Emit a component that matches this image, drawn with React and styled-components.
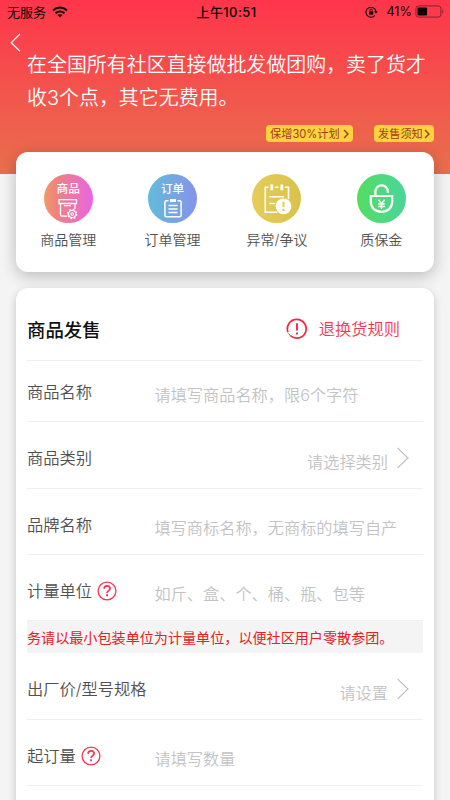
import React from 'react';
import styled, { createGlobalStyle } from 'styled-components';

const GlobalStyle = createGlobalStyle`
  * {
    box-sizing: border-box;
  }

  body {
    margin: 0;
    background: #f4f4f4;
    font-family: Inter, 'Noto Sans CJK SC', sans-serif;
    overflow: hidden;
  }
`;

const Page = styled.div`
  width: 450px;
  height: 800px;
  overflow: hidden;
  background: #f4f4f4;
`;

const Header = styled.header`
  height: 174px;
  background: linear-gradient(#ff354b, #e8704d);
`;

const StatusBar = styled.div`
  display: grid;
  grid-template-columns: 1fr auto 1fr;
  align-items: center;
  height: 22px;
  padding: 0 6px 0 7px;
  color: #0c0305;
  font-size: 13px;
  line-height: 22px;
`;

const StatusGroup = styled.div`
  display: flex;
  align-items: center;
  justify-content: ${({ end }) => (end ? 'flex-end' : 'flex-start')};
  gap: ${({ end }) => (end ? '0' : '6px')};
`;

const Clock = styled.span`
  padding-left: 2px;
  font-weight: 500;
  letter-spacing: 0.4px;
`;

const Percent = styled.span`
  margin: 1px 3px 0 8px;
  font-size: 12.7px;
`;

const Intro = styled.div`
  display: flex;
  height: 92px;
  padding: 11px 0 0 10px;
`;

const BackButton = styled.button`
  width: 17px;
  height: 20px;
  padding: 0;
  border: 0;
  background: none;
  text-align: left;
`;

const Slogan = styled.p`
  width: 405px;
  margin: 16px 0 0;
  color: #fff;
  font-size: 19.95px;
  font-weight: 350;
  line-height: 33px;
`;

const Pills = styled.div`
  display: flex;
  justify-content: flex-end;
  gap: 21px;
  padding: 11px 16px 0 0;
`;

const Pill = styled.a`
  display: flex;
  align-items: center;
  justify-content: space-between;
  width: ${({ width }) => width}px;
  height: 17px;
  padding: 0 4px;
  border-radius: 4px;
  background: #fbd43d;
  color: #a5381c;
  font-size: 11.2px;
  line-height: 18px;
  white-space: nowrap;
`;

const Card = styled.section`
  margin: 0 16px 16px;
  border-radius: 12px;
  background: #fff;
  box-shadow: 0 4px 16px rgba(0, 0, 0, 0.24);
`;

const MenuCard = styled(Card)`
  position: relative;
  display: grid;
  grid-template-columns: repeat(4, 104.4px);
  height: 120px;
  margin-top: -22px;
  padding-top: 22px;
`;

const MenuItem = styled.div`
  display: flex;
  flex-direction: column;
  align-items: center;
  color: #505050;
  font-size: 14px;
  font-weight: 350;
  line-height: 20px;
`;

const Circle = styled.div`
  display: flex;
  flex-direction: column;
  align-items: center;
  width: 49px;
  height: 49px;
  margin-bottom: 7px;
  border-radius: 50%;
  background: ${({ colors }) => `linear-gradient(90deg, ${colors})`};
`;

const CircleText = styled.span`
  height: 16px;
  margin: 7px 0 2px;
  color: #fff;
  font-size: 11.7px;
  font-weight: 500;
  line-height: 16px;
`;

const FormCard = styled(Card)`
  position: relative;
  height: 530px;
  padding: 0 11px;
  box-shadow: 0 3px 9px rgba(0, 0, 0, 0.2);
`;

const TitleRow = styled.div`
  display: flex;
  align-items: center;
  height: 73px;
  padding: 9px 23px 0 0;
  border-bottom: 1px solid #f0f0f0;
`;

const Title = styled.h1`
  flex: 1;
  margin: 3px 0 0;
  color: #111;
  font-size: 18.4px;
  font-weight: 500;
  line-height: 26px;
`;

const RuleLink = styled.a`
  display: flex;
  align-items: center;
  gap: 11px;
  color: #fb344f;
  font-size: 16.25px;
  font-weight: 350;
  line-height: 24px;
`;

const Row = styled.div`
  display: flex;
  align-items: center;
  height: ${({ height }) => height || 66}px;
  padding-top: ${({ drop }) => drop ?? 6}px;
  border-bottom: 1px solid #f0f0f0;
`;

const Label = styled.div`
  display: flex;
  align-items: center;
  gap: 5px;
  width: 127.5px;
  color: #505050;
  font-size: 16.25px;
  font-weight: 350;
  line-height: 24px;
  white-space: nowrap;
`;

const Value = styled.div`
  flex: 1;
  padding-top: 7px;
  color: #c3c3c3;
  font-size: 16.2px;
  font-weight: 350;
  line-height: 24px;
  text-align: ${({ right }) => (right ? 'right' : 'left')};
  white-space: nowrap;
`;

const RowArrow = styled.svg`
  margin: -1px 13px 0 8px;
`;

const Note = styled.div`
  height: 32px;
  background: #f4f4f4;
  color: #e5201f;
  font-size: 14.1px;
  line-height: 33px;
  white-space: nowrap;
`;

const WifiIcon = () => (
  <svg width="16" height="12" viewBox="0 0 16 12" fill="none" stroke="#0c0305">
    <path d="M1 4.4C5 .6 11 .6 15 4.4" strokeWidth="2" />
    <path d="M3.6 7.2c2.6-2.4 6.2-2.4 8.8 0" strokeWidth="2" />
    <path d="M8 11.6 5.5 9.1c1.4-1.3 3.6-1.3 5 0z" fill="#0c0305" stroke="none" />
  </svg>
);

const LockIcon = () => (
  <svg width="13" height="12" viewBox="0 0 13 12" fill="none" stroke="#0c0305">
    <path d="M9.8 9.5A5 5 0 1 1 11 6" strokeWidth="1.1" />
    <path d="M9 5.3h3.8L11 7.8z" fill="#0c0305" stroke="none" />
    <path d="M4 5.4h4.2v3.2H4z" fill="#0c0305" stroke="none" />
    <path d="M4.9 5.5V4.3a1.2 1.2 0 0 1 2.4 0v1.2" strokeWidth=".9" />
  </svg>
);

const BatteryIcon = () => (
  <svg width="29" height="13" viewBox="0 0 29 13" fill="none">
    <rect x=".9" y=".9" width="25" height="11.2" rx="2.6" stroke="#7c2530" />
    <rect x="2.5" y="2.5" width="9.6" height="8" rx="1" fill="#0c0305" />
    <path d="M27.3 4.5c1.4.6 1.4 3.4 0 4z" fill="#7c2530" />
  </svg>
);

const PillArrow = () => (
  <svg width="6" height="10" viewBox="0 0 6 10" fill="none">
    <path d="m1 1 4 4-4 4" stroke="#a5381c" strokeWidth="1.4" />
  </svg>
);

const GoodsIcon = () => (
  <svg width="22" height="21" viewBox="0 0 22 21" fill="none" stroke="#fff" strokeWidth="1.3">
    <path d="M2 .7h17.5v3.8H2zM3.5 4.5v11.3q0 1.3 1.3 1.3H10M18 4.5V10M7 6.7h7" />
    <circle cx="15.2" cy="15" r="3.7" />
    <circle cx="15.2" cy="15" r="1.3" strokeWidth="1.1" />
    <circle cx="15.2" cy="15" r="4.6" strokeWidth="1.2" strokeDasharray="1.8 1.81" />
  </svg>
);

const OrderIcon = () => (
  <svg width="18" height="19" viewBox="0 0 18 19" fill="none" stroke="#fff" strokeWidth="1.5">
    <path d="M4.6 1.8H2.4Q.9 1.8.9 3.3v12.9q0 1.5 1.5 1.5h13.2q1.5 0 1.5-1.5V3.3q0-1.5-1.5-1.5h-2.2" />
    <path d="M6 1.6h6" strokeWidth="3" />
    <path d="M4.5 6.5h9M4.5 10h9M4.5 13.5h9" />
  </svg>
);

const DisputeIcon = () => (
  <svg width="49" height="49" viewBox="0 0 49 49" fill="none" stroke="#fff" strokeWidth="1.6">
    <path d="M16.5 13.3h-3.2v24.9h12M23 13.3h3.5M32.8 13.3h3.7v12" />
    <path d="M17.3 22.8h14.5M17.3 29.5h6" />
    <path d="M19.8 10.6v5.6M29.8 10.6v5.6" strokeWidth="2.8" />
    <circle cx="31.5" cy="32.3" r="7.9" fill="#fff" stroke="none" />
    <path d="M31.5 27.8v5.3M31.5 34.7v2.2" stroke="#decb50" strokeWidth="1.9" />
  </svg>
);

const DepositIcon = () => (
  <svg width="49" height="49" viewBox="0 0 49 49" fill="none" stroke="#fff" strokeWidth="2.2">
    <path d="M18.4 22v-4.5a6.2 6.2 0 0 1 12.4 0v1.3" />
    <path d="M13.8 22h21.4v5.7c0 6.2-4.7 10.2-10.7 10.2s-10.7-4-10.7-10.2z" />
    <path d="m21.4 25.7 3.1 3.9 3.1-3.9M24.5 29.6v5.5M21.2 30h6.6M21.2 32.5h6.6" strokeWidth="1.4" />
  </svg>
);

const AlertIcon = () => (
  <svg width="22" height="22" viewBox="0 0 22 22" fill="none" stroke="#fb2340" strokeWidth="1.7">
    <path d="M2 14.2A9.4 9.4 0 1 1 4.2 17.5" />
    <path d="M4.2 17.5q-1.2-.9-1.7-2" strokeWidth="1" />
    <path d="M11 5.3v7.3M11 14.5v2.1" strokeWidth="1.9" />
  </svg>
);

const HelpIcon = () => (
  <svg width="20" height="20" viewBox="0 0 20 20" fill="none" stroke="#fb344f">
    <circle cx="10" cy="10" r="8.9" strokeWidth="1.3" />
    <path d="M7.1 7.8c0-3.9 6-3.7 6-.4 0 2.2-3 2.3-3 4.5M10.1 13.2v2" strokeWidth="1.8" />
  </svg>
);

const menu = [
  { label: '商品管理', text: '商品', icon: <GoodsIcon />, colors: '#f09b68, #ef827f 25%, #e865e5' },
  { label: '订单管理', text: '订单', icon: <OrderIcon />, colors: '#62bbdb, #8693e9' },
  { label: '异常/争议', icon: <DisputeIcon />, colors: '#e6cd5b, #d9c24a' },
  { label: '质保金', icon: <DepositIcon />, colors: '#55dc61, #48d69b' },
];

const Field = ({ label, value, help, arrow, height, drop }) => (
  <Row height={height} drop={drop}>
    <Label>
      {label}
      {help && <HelpIcon />}
    </Label>
    <Value right={arrow ? 1 : undefined}>{value}</Value>
    {arrow && (
      <RowArrow width="14" height="22" viewBox="0 0 14 22" fill="none">
        <path d="M1.5.8 12 11 1.5 21.2" stroke="#bdbdbd" strokeWidth="1.1" />
      </RowArrow>
    )}
  </Row>
);

const App = () => (
  <Page>
    <GlobalStyle />
    <Header>
      <StatusBar>
        <StatusGroup>
          无服务
          <WifiIcon />
        </StatusGroup>
        <Clock>上午10:51</Clock>
        <StatusGroup end={1}>
          <LockIcon />
          <Percent>41%</Percent>
          <BatteryIcon />
        </StatusGroup>
      </StatusBar>
      <Intro>
        <BackButton aria-label="返回">
          <svg width="11" height="20" viewBox="0 0 11 20" fill="none">
            <path d="M10 1 1.2 9.7 10 18.3" stroke="#fff" strokeWidth="1.2" />
          </svg>
        </BackButton>
        <Slogan>在全国所有社区直接做批发做团购，卖了货才收3个点，其它无费用。</Slogan>
      </Intro>
      <Pills>
        <Pill width={87}>
          保增30%计划
          <PillArrow />
        </Pill>
        <Pill width={60}>
          发售须知
          <PillArrow />
        </Pill>
      </Pills>
    </Header>
    <MenuCard>
      {menu.map(({ label, text, icon, colors }) => (
        <MenuItem key={label}>
          <Circle colors={colors}>
            {text && <CircleText>{text}</CircleText>}
            {icon}
          </Circle>
          {label}
        </MenuItem>
      ))}
    </MenuCard>
    <FormCard>
      <TitleRow>
        <Title>商品发售</Title>
        <RuleLink>
          <AlertIcon />
          退换货规则
        </RuleLink>
      </TitleRow>
      <Field label="商品名称" value="请填写商品名称，限6个字符" height={61} drop={1} />
      <Field label="商品类别" value="请选择类别" height={67} arrow />
      <Field label="品牌名称" value="填写商标名称，无商标的填写自产" />
      <Field label="计量单位" value="如斤、盒、个、桶、瓶、包等" help />
      <Note>务请以最小包装单位为计量单位，以便社区用户零散参团。</Note>
      <Field label="出厂价/型号规格" value="请设置" height={67} arrow />
      <Field label="起订量" value="请填写数量" help />
    </FormCard>
  </Page>
);

export default App;
